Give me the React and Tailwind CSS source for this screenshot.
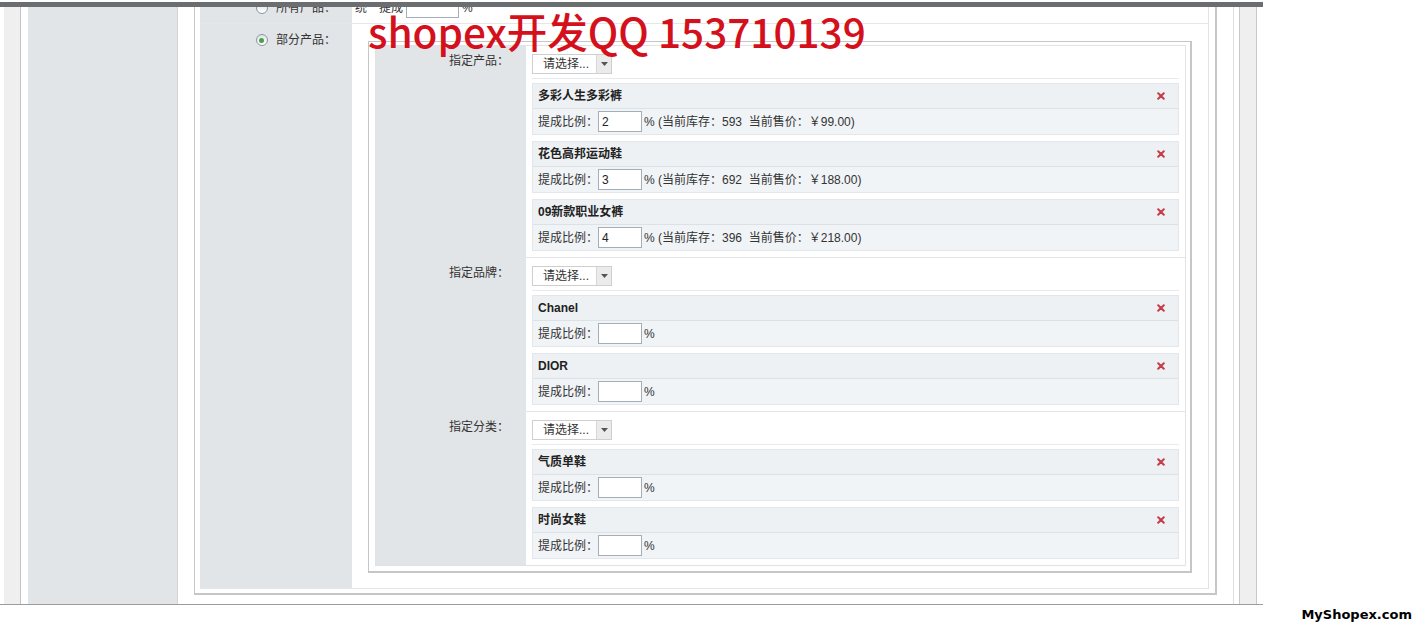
import React from "react";

function Radio({ checked }) {
  return (
    <span className="inline-flex h-[12px] w-[12px] shrink-0 items-center justify-center rounded-full border border-[#8a96a1] bg-linear-to-b from-[#dfe4e8] to-white">
      {checked ? <span className="h-[5px] w-[5px] rounded-full bg-[#48a148]" /> : null}
    </span>
  );
}

function Select() {
  return (
    <div className="flex h-[20px] w-[80px] border border-[#cfcfcf] bg-white">
      <div className="flex flex-1 items-center pl-[10px] text-[12px] leading-none text-[#333]">请选择...</div>
      <div className="flex w-[15px] items-center justify-center border-l border-[#d6d6d6] bg-[#ebebeb]">
        <svg width="7" height="4" viewBox="0 0 7 4">
          <path d="M0 0h7L3.5 4z" fill="#555" />
        </svg>
      </div>
    </div>
  );
}

function XIcon() {
  return (
    <svg width="8" height="8" viewBox="0 0 8 8">
      <path d="M1.2 1.2L6.8 6.8M6.8 1.2L1.2 6.8" stroke="#c53d4a" strokeWidth="2" strokeLinecap="round" />
    </svg>
  );
}

function Item({ name, value, extra }) {
  return (
    <div className="border-y border-x border-[#e3e7eb]">
      <div className="flex h-[25px] items-center justify-between border-b border-[#dce1e5] bg-[#eef1f4] pl-[5px] pr-[13px]">
        <span className="text-[12px] font-bold text-[#222]">{name}</span>
        <XIcon />
      </div>
      <div className="flex h-[25px] items-center bg-[#f1f4f7] pl-[5px] text-[12px] text-[#333]">
        <span>提成比例：</span>
        <div className="flex h-[21px] w-[44px] items-center border border-[#a3aeb8] bg-white pl-[3px] text-[12px] text-[#222]">
          {value}
        </div>
        <span className="ml-[2px] whitespace-pre">{extra}</span>
      </div>
    </div>
  );
}

function Section({ label, first, children }) {
  return (
    <div className={first ? "flex" : "flex border-t border-[#e3e5e8]"}>
      <div className="w-[150px] shrink-0 bg-[#e2e5e8] pr-[17px] pt-[8px] text-right text-[12px] leading-[14px] text-[#333]">
        {label}
      </div>
      <div className="flex-1 bg-white px-[6px] pb-[6px] pt-[8px]">
        <Select />
        <div className="mt-[4px] h-px bg-[#e8ebee]" />
        <div className="mt-[4px] flex flex-col gap-[6px]">{children}</div>
      </div>
    </div>
  );
}

export default function App() {
  return (
    <div className="relative h-[639px] w-[1418px] overflow-hidden bg-white font-[family-name:'Liberation_Sans','Noto_Sans_CJK_SC',sans-serif] text-[12px] text-[#333]">
      <div className="flex h-[605px] w-[1263px] overflow-hidden border-b border-[#9c9c9c]">
        <div className="w-[4px] shrink-0" />
        <div className="w-[17px] shrink-0 border-r border-[#c4c4c4] bg-[#efefef]" />
        <div className="w-[7px] shrink-0" />
        <div className="w-[150px] shrink-0 border-r border-[#d2d5d8] bg-[#e2e5e8]" />
        <div className="w-[16px] shrink-0" />

        <div className="-mt-[7px] w-[1023px] shrink-0 self-start border-b-2 border-l border-r-2 border-[#c6c6c6] pb-[4px] pl-[5px] pr-[6px]">
          <div className="flex flex-col border-r border-[#e2e2e2]">
            <div className="flex h-[31px] border-b border-[#e4e7ea]">
              <div className="flex w-[152px] shrink-0 items-center justify-end gap-[8px] bg-[#e2e5e8] pr-[16px]">
                <Radio />
                <span className="leading-[14px]">所有产品：</span>
              </div>
              <div className="flex flex-1 items-center pl-[3px]">
                <span>统一提成</span>
                <div className="ml-[3px] h-[20px] w-[53px] border border-[#a3aeb8] bg-white" />
                <span className="ml-[3px]">%</span>
              </div>
            </div>
            <div className="flex border-b border-[#e4e7ea]">
              <div className="w-[152px] shrink-0 bg-[#e2e5e8] pr-[16px] pt-[9px]">
                <div className="flex h-[14px] items-center justify-end gap-[8px]">
                  <Radio checked />
                  <span className="leading-[14px]">部分产品：</span>
                </div>
              </div>
              <div className="flex-1 pb-[15px] pl-[16px] pr-[16px] pt-[17px]">
                <div className="border-b-2 border-l border-r-2 border-t border-[#c6c6c6] pb-[5px] pl-[6px] pr-[4px] pt-[3px]">
                  <div className="flex flex-col border border-[#e2e2e2]">
                    <Section label="指定产品：" first>
                      <Item name="多彩人生多彩裤" value="2" extra="% (当前库存：593  当前售价：￥99.00)" />
                      <Item name="花色高邦运动鞋" value="3" extra="% (当前库存：692  当前售价：￥188.00)" />
                      <Item name="09新款职业女裤" value="4" extra="% (当前库存：396  当前售价：￥218.00)" />
                    </Section>
                    <Section label="指定品牌：">
                      <Item name="Chanel" value="" extra="%" />
                      <Item name="DIOR" value="" extra="%" />
                    </Section>
                    <Section label="指定分类：">
                      <Item name="气质单鞋" value="" extra="%" />
                      <Item name="时尚女鞋" value="" extra="%" />
                    </Section>
                  </div>
                </div>
              </div>
            </div>
          </div>
        </div>

        <div className="w-[16px] shrink-0" />
        <div className="w-px shrink-0 bg-[#dedede]" />
        <div className="w-[5px] shrink-0" />
        <div className="w-[18px] shrink-0 border-x border-[#c8c8c8] bg-[#efefef]" />
        <div className="w-[6px] shrink-0" />
      </div>

      <div className="absolute left-0 top-0 h-[7px] w-[1263px] border-t-2 border-white bg-[#6b6e71]" />

      <div className="absolute left-[368px] top-[11px] whitespace-nowrap font-[family-name:'Noto_Sans_CJK_SC',sans-serif] text-[40.5px] font-medium leading-none text-[#d4101c]">
        shopex开发QQ 153710139
      </div>

      <div className="absolute right-[6px] top-[607px] font-[family-name:'DejaVu_Sans',sans-serif] text-[13px] font-bold leading-[16px] text-black">
        MyShopex.com
      </div>
    </div>
  );
}
